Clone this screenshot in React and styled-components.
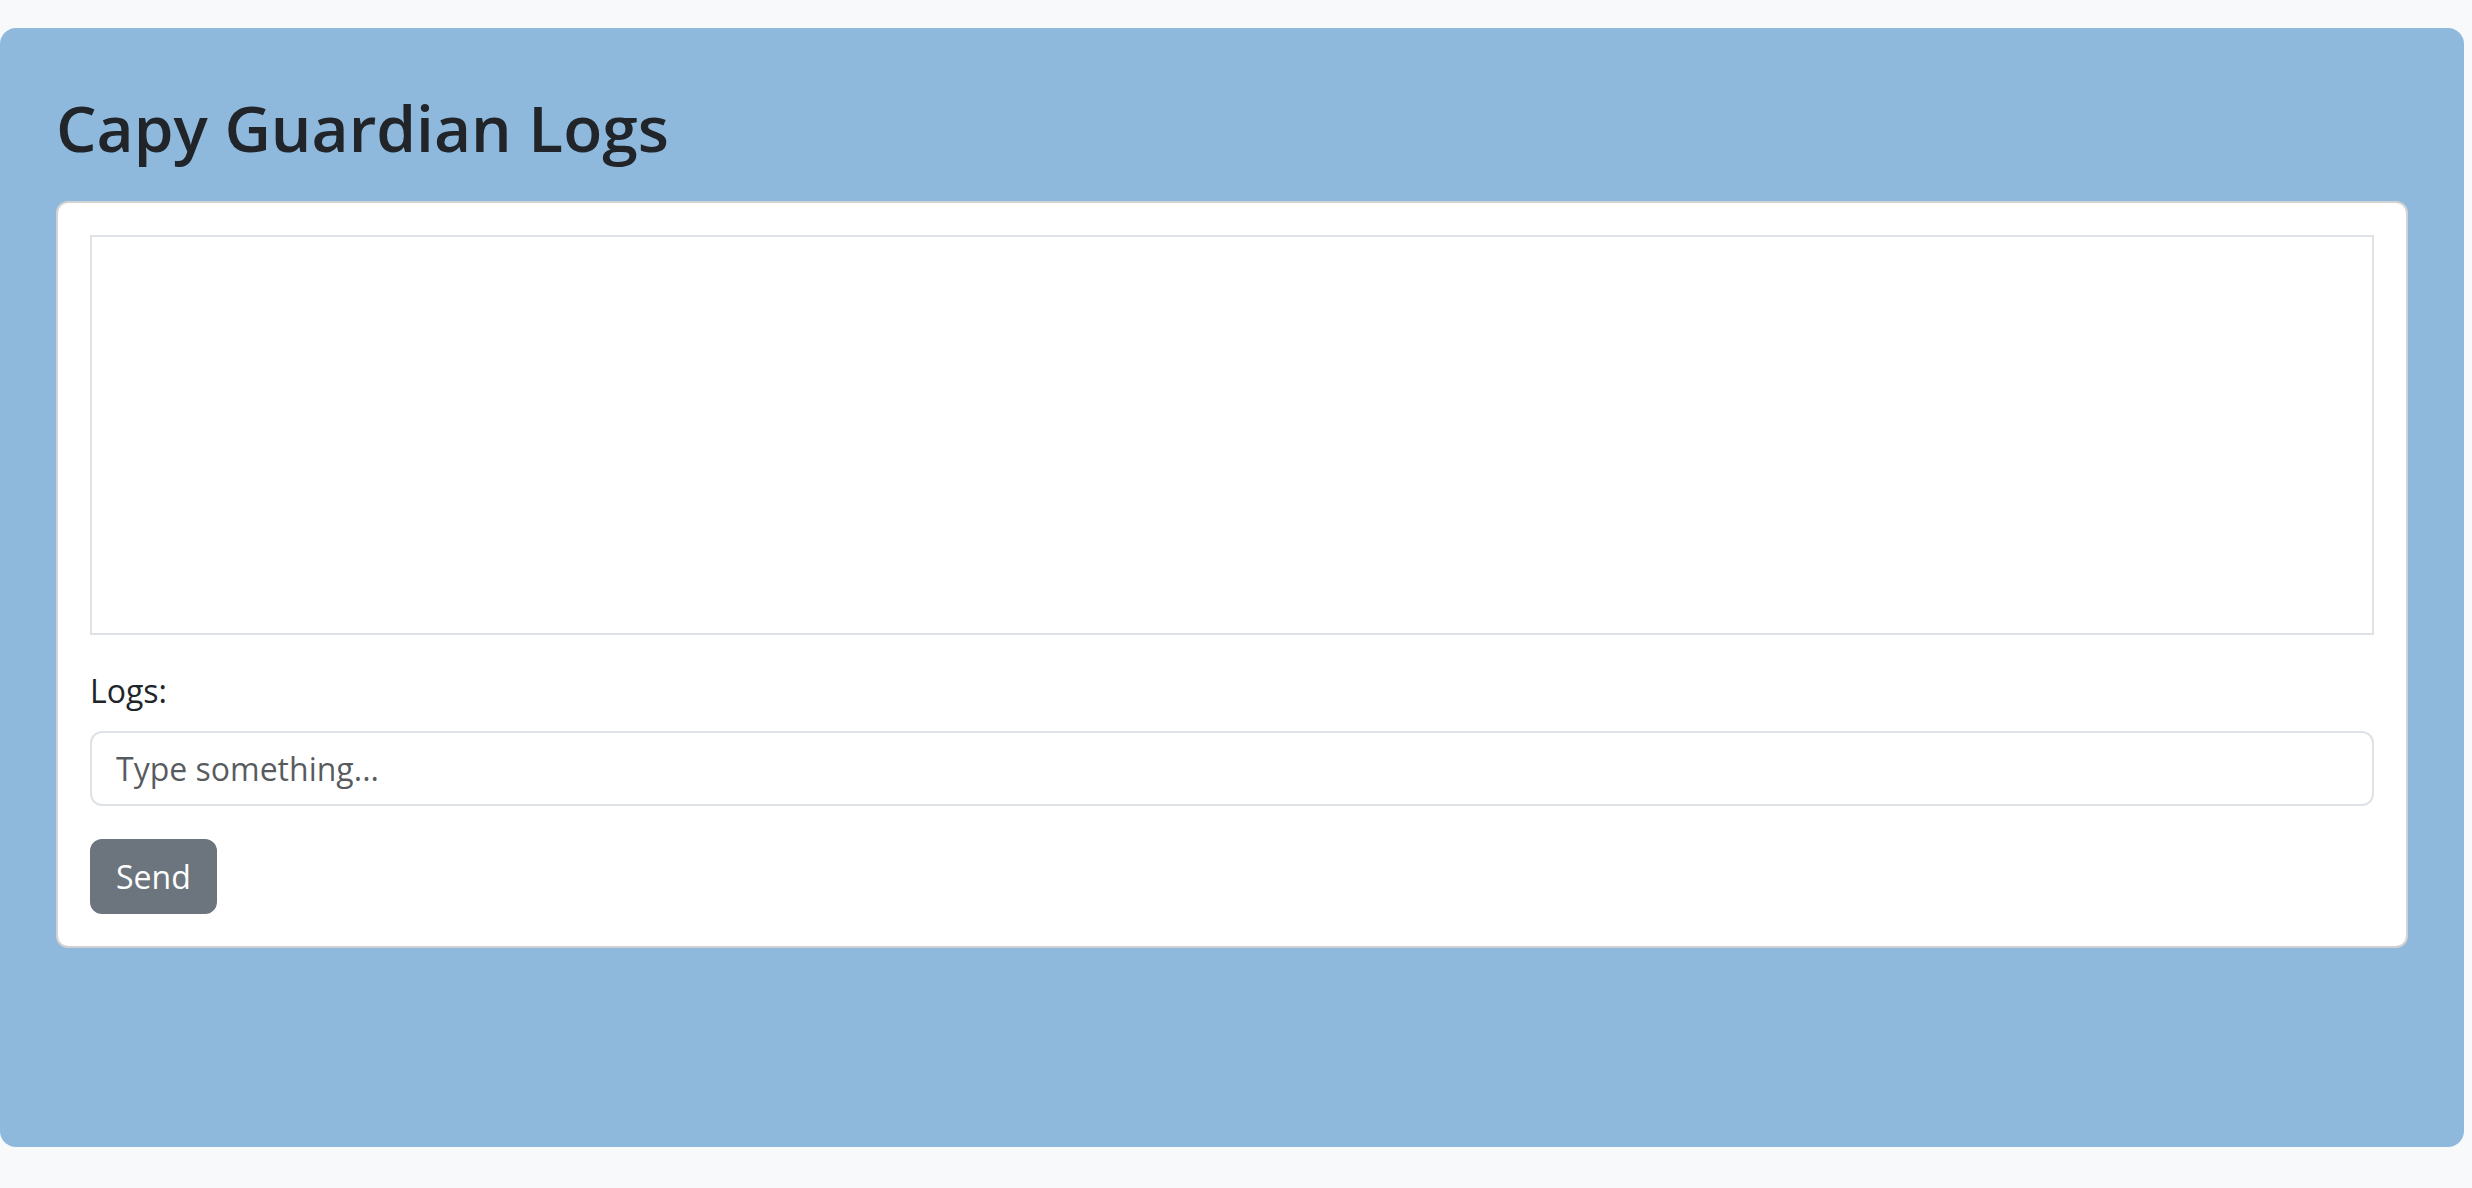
import styled, { createGlobalStyle } from 'styled-components';

const GlobalStyle = createGlobalStyle`
    html, body {
        margin: 0;
        padding: 0;
        background: #f8f9fa;
        font-family: "Open Sans", "Liberation Sans", sans-serif;
        color: #212529;
    }
    * {
        box-sizing: border-box;
    }
`;

const Page = styled.div`
    padding: 28px 8px 41px 0px;
`;

const Panel = styled.section`
    height: 1119px;
    background: #8eb9dd;
    border-radius: 16px;
    padding: 56px 56px;
`;

const Title = styled.h1`
    margin: 6px 0px 34px 0px;
    font-size: 64px;
    font-weight: 600;
    line-height: 1.2;
    color: #212529;
`;

const Card = styled.div`
    background: #fff;
    border: 2px solid #d2d2d2;
    border-radius: 12px;
    padding: 32px;
`;

const LogBox = styled.div`
    height: 400px;
    border: 2px solid #dee2e6;
    overflow-y: auto;
`;

const Label = styled.label`
    display: block;
    margin: 32px 0px 16px 0px;
    font-size: 32px;
    line-height: 1.5;
`;

const Input = styled.input`
    display: block;
    width: 100%;
    height: 75px;
    padding: 12px 24px;
    font-family: inherit;
    font-size: 32px;
    line-height: 1.5;
    color: #212529;
    border: 2px solid #dee2e6;
    border-radius: 12px;
    outline: none;
    &::placeholder {
        color: rgba(33, 37, 41, 0.75);
    }
`;

const Button = styled.button`
    display: block;
    margin-top: 33px;
    height: 75px;
    padding: 0px 24px;
    font-family: inherit;
    font-size: 32px;
    color: #fff;
    background: #6c757d;
    border: 2px solid #6c757d;
    border-radius: 12px;
`;

const App = () => {
    return (
        <Page>
            <GlobalStyle />
            <Panel>
                <Title>Capy Guardian Logs</Title>
                <Card>
                    <LogBox />
                    <Label htmlFor="logInput">Logs:</Label>
                    <Input id="logInput" type="text" placeholder="Type something..." />
                    <Button>Send</Button>
                </Card>
            </Panel>
        </Page>
    );
};

export default App;
